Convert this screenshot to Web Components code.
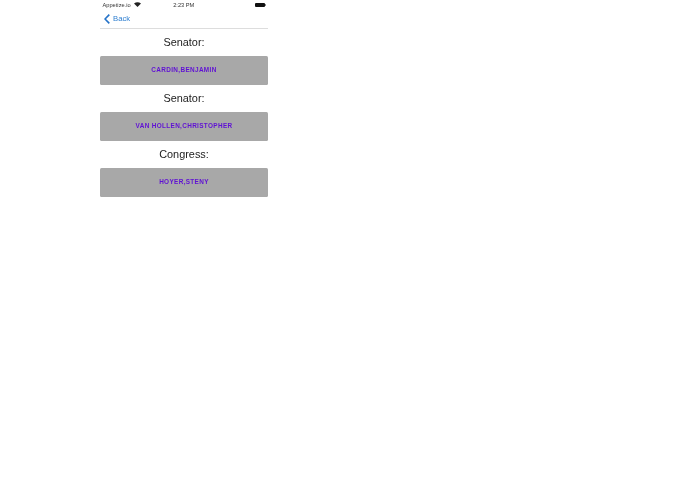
<!DOCTYPE html>
<html>
<head>
<meta charset="utf-8">
<title>Representatives</title>
<style>
    html, body { margin: 0; background: #fff; }
    body { font-family: "Liberation Sans", Arial, sans-serif; }
    phone-screen { margin-left: 100px; }
</style>
</head>
<body>
<phone-screen>
    <status-bar carrier="Appetize.io" time="2:23 PM"></status-bar>
    <nav-bar>Back</nav-bar>
    <rep-entry office="Senator:" name="CARDIN,BENJAMIN"></rep-entry>
    <rep-entry office="Senator:" name="VAN HOLLEN,CHRISTOPHER"></rep-entry>
    <rep-entry office="Congress:" name="HOYER,STENY"></rep-entry>
</phone-screen>

<script>
class PhoneScreen extends HTMLElement {
    constructor() {
        super();
        this.attachShadow({ mode: "open" });
        this.shadowRoot.innerHTML = `
            <style>
                :host {
                    display: flex;
                    flex-direction: column;
                    width: 168px;
                    filter: blur(0.2px);
                }
            </style>
            <slot></slot>
        `;
    }
}

class StatusBar extends HTMLElement {
    constructor() {
        super();
        this.attachShadow({ mode: "open" });
        const carrier = this.getAttribute("carrier");
        const time = this.getAttribute("time");
        this.shadowRoot.innerHTML = `
            <style>
                :host {
                    display: grid;
                    grid-template-columns: 1fr auto 1fr;
                    align-items: center;
                    height: 9px;
                    padding: 0 3px 0 2.5px;
                    font-size: 5.7px;
                    color: #333;
                }
                .left { display: flex; align-items: center; gap: 3px; }
                .right { display: flex; justify-content: flex-end; }
                .battery {
                    width: 10px;
                    height: 4px;
                    background: #111;
                    border-radius: 1px;
                    position: relative;
                }
                .battery::after {
                    content: "";
                    position: absolute;
                    left: 10px;
                    top: 1px;
                    width: 1px;
                    height: 2px;
                    background: #888;
                }
            </style>
            <div class="left">
                <span>${carrier}</span>
                <svg width="7" height="5" viewBox="0 0 14 10">
                    <path d="M7 10 L0 3 Q7 -2 14 3 Z" fill="#222"/>
                </svg>
            </div>
            <span>${time}</span>
            <div class="right"><div class="battery"></div></div>
        `;
    }
}

class NavBar extends HTMLElement {
    constructor() {
        super();
        this.attachShadow({ mode: "open" });
        this.shadowRoot.innerHTML = `
            <style>
                :host {
                    display: flex;
                    align-items: center;
                    gap: 3px;
                    height: 19px;
                    padding-left: 4px;
                    border-bottom: 1px solid #ddd;
                    color: #2f7fd0;
                    font-size: 7.7px;
                }
            </style>
            <svg width="6" height="10" viewBox="0 0 6 10">
                <path d="M5.3 0.6 L1 5 L5.3 9.4" fill="none" stroke="#2472c8" stroke-width="1.6"/>
            </svg>
            <slot></slot>
        `;
    }
}

class RepEntry extends HTMLElement {
    constructor() {
        super();
        this.attachShadow({ mode: "open" });
        const office = this.getAttribute("office");
        const name = this.getAttribute("name");
        this.shadowRoot.innerHTML = `
            <style>
                :host {
                    display: flex;
                    flex-direction: column;
                }
                .office {
                    height: 26px;
                    padding-bottom: 1px;
                    display: flex;
                    align-items: center;
                    justify-content: center;
                    font-size: 10.9px;
                    color: #222;
                }
                .name {
                    height: 27px;
                    padding-bottom: 2px;
                    display: flex;
                    align-items: center;
                    justify-content: center;
                    background: #a8a8a8;
                    border-radius: 1.5px;
                    color: #5f10d4;
                    font-size: 6.4px;
                    font-weight: bold;
                    letter-spacing: 0.35px;
                }
            </style>
            <div class="office">${office}</div>
            <div class="name">${name}</div>
        `;
    }
}

customElements.define("phone-screen", PhoneScreen);
customElements.define("status-bar", StatusBar);
customElements.define("nav-bar", NavBar);
customElements.define("rep-entry", RepEntry);
</script>
</body>
</html>
